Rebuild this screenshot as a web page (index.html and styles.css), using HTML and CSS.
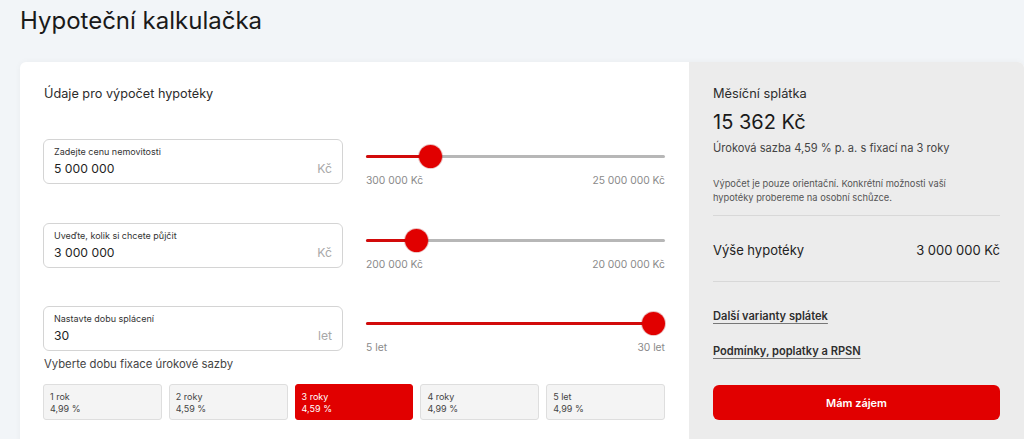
FILE: index.html
```html
<!DOCTYPE html>
<html lang="cs">
<head>
<meta charset="utf-8">
<title>Hypoteční kalkulačka</title>
<link rel="stylesheet" href="styles.css">
</head>
<body>
<h1 class="title">Hypoteční kalkulačka</h1>
<div class="card">
  <section class="form">
    <h2 class="form-heading">Údaje pro výpočet hypotéky</h2>

    <div class="row">
      <label class="field">
        <span class="field-label">Zadejte cenu nemovitosti</span>
        <span class="field-line"><span class="field-value">5 000 000</span><span class="field-unit">Kč</span></span>
      </label>
      <div class="slider">
        <div class="track-area">
          <div class="track"><div class="fill" style="width: calc(11.5px + 0.1903 * (100% - 23px))"></div></div>
          <div class="thumb" style="left: calc(0.1903 * (100% - 23px))"></div>
        </div>
        <div class="range-labels"><span>300 000 Kč</span><span>25 000 000 Kč</span></div>
      </div>
    </div>

    <div class="row">
      <label class="field">
        <span class="field-label">Uveďte, kolik si chcete půjčit</span>
        <span class="field-line"><span class="field-value">3 000 000</span><span class="field-unit">Kč</span></span>
      </label>
      <div class="slider">
        <div class="track-area">
          <div class="track"><div class="fill" style="width: calc(11.5px + 0.1414 * (100% - 23px))"></div></div>
          <div class="thumb" style="left: calc(0.1414 * (100% - 23px))"></div>
        </div>
        <div class="range-labels"><span>200 000 Kč</span><span>20 000 000 Kč</span></div>
      </div>
    </div>

    <div class="row row-last">
      <label class="field">
        <span class="field-label">Nastavte dobu splácení</span>
        <span class="field-line"><span class="field-value">30</span><span class="field-unit">let</span></span>
      </label>
      <div class="slider">
        <div class="track-area">
          <div class="track"><div class="fill" style="width: calc(11.5px + 1 * (100% - 23px))"></div></div>
          <div class="thumb" style="left: calc(1 * (100% - 23px))"></div>
        </div>
        <div class="range-labels"><span>5 let</span><span>30 let</span></div>
      </div>
    </div>

    <p class="fix-heading">Vyberte dobu fixace úrokové sazby</p>
    <div class="fix-options">
      <button class="fix"><span>1 rok</span><span>4,99 %</span></button>
      <button class="fix"><span>2 roky</span><span>4,59 %</span></button>
      <button class="fix fix-active"><span>3 roky</span><span>4,59 %</span></button>
      <button class="fix"><span>4 roky</span><span>4,99 %</span></button>
      <button class="fix"><span>5 let</span><span>4,99 %</span></button>
    </div>
  </section>

  <aside class="summary">
    <div class="sum-label">Měsíční splátka</div>
    <div class="sum-amount">15 362 Kč</div>
    <div class="sum-rate">Úroková sazba 4,59 % p. a. s fixací na 3 roky</div>
    <p class="sum-note">Výpočet je pouze orientační. Konkrétní možnosti vaší hypotéky probereme na osobní schůzce.</p>
    <div class="sum-row"><span>Výše hypotéky</span><span>3 000 000 Kč</span></div>
    <div class="sum-links">
      <a class="sum-link" href="#">Další varianty splátek</a>
      <a class="sum-link" href="#">Podmínky, poplatky a RPSN</a>
    </div>
    <button class="cta">Mám zájem</button>
  </aside>
</div>
</body>
</html>
```

FILE: styles.css
```css
* { box-sizing: border-box; }

html, body {
  margin: 0;
  padding: 0;
}

body {
  background: #f2f5f8;
  font-family: Inter, "Noto Sans", "Liberation Sans", sans-serif;
  color: #222;
  overflow: hidden;
}

.title {
  margin: 0;
  padding: 6px 0 0 20px;
  font-size: 24px;
  line-height: 30px;
  font-weight: 400;
  color: #1a1a1a;
}

.card {
  margin: 26px 0 0 20px;
  display: grid;
  grid-template-columns: 669px 1fr;
  background: #fff;
  border-radius: 6px;
  box-shadow: 0 0 6px rgba(0, 0, 0, 0.04);
  overflow: hidden;
  min-height: 420px;
}

.form {
  padding: 22px 24px 0 23px;
}

.form-heading {
  margin: 0 0 35px 1px;
  font-size: 12.7px;
  line-height: 20px;
  font-weight: 400;
  color: #2b2b2b;
}

.row {
  display: grid;
  grid-template-columns: 300px 1fr;
  column-gap: 23px;
  margin-bottom: 35.5px;
}

.row-last {
  margin-bottom: 2px;
}

.field {
  display: flex;
  flex-direction: column;
  height: 45px;
  border: 1px solid #d4d4d4;
  border-radius: 6px;
  padding: 6px 10px 0 10px;
  background: #fff;
}

.field-label {
  font-size: 9px;
  line-height: 12px;
  color: #333;
}

.field-line {
  display: flex;
  justify-content: space-between;
  margin-top: 3px;
  font-size: 12.2px;
  line-height: 16px;
}

.field-value {
  color: #1f1f1f;
}

.field-unit {
  color: #a8a8a8;
}

.slider {
  display: flex;
  flex-direction: column;
}

.track-area {
  position: relative;
  height: 34px;
}

.track {
  position: absolute;
  left: 0;
  right: 0;
  top: 16px;
  height: 3px;
  background: #b7b7b7;
  border-radius: 2px;
}

.fill {
  height: 100%;
  background: #d20a0a;
  border-radius: 2px;
}

.thumb {
  position: absolute;
  top: 6px;
  width: 23px;
  height: 23px;
  border-radius: 50%;
  background: #e10000;
  box-shadow: 0 0 0 1px rgba(170, 0, 0, 0.25);
}

.range-labels {
  display: flex;
  justify-content: space-between;
  font-size: 10.3px;
  line-height: 14px;
  color: #8a8a8a;
}

.fix-heading {
  margin: 0 0 12px 1px;
  font-size: 11.3px;
  line-height: 16px;
  color: #444;
}

.fix-options {
  display: grid;
  grid-template-columns: repeat(5, 1fr);
  column-gap: 7px;
}

.fix {
  display: flex;
  flex-direction: column;
  align-items: flex-start;
  height: 36px;
  padding: 6px 6px 0 6px;
  border: 1px solid #dedede;
  border-radius: 3px;
  background: #f4f4f4;
  font-family: inherit;
  font-size: 9px;
  line-height: 11.5px;
  color: #444;
  text-align: left;
}

.fix-active {
  background: #e10000;
  border-color: #e10000;
  color: #fff;
}

.summary {
  background: #ececec;
  padding: 22px 24px 0 24px;
}

.sum-label {
  font-size: 12.8px;
  line-height: 20px;
  color: #2b2b2b;
}

.sum-amount {
  margin-top: 6px;
  font-size: 20px;
  line-height: 24px;
  color: #1a1a1a;
}

.sum-rate {
  margin-top: 6px;
  font-size: 11.1px;
  line-height: 16px;
  color: #444;
}

.sum-note {
  max-width: 250px;
  margin: 21px 0 0 0;
  padding-bottom: 10px;
  font-size: 9.3px;
  line-height: 14px;
  color: #555;
}

.sum-row {
  display: flex;
  justify-content: space-between;
  padding: 24px 0 21px 0;
  font-size: 13px;
  line-height: 20px;
  color: #222;
  border-top: 1px solid #d8d8d8;
  border-bottom: 1px solid #d8d8d8;
}

.sum-links {
  display: flex;
  flex-direction: column;
  align-items: flex-start;
  gap: 19px;
  padding-top: 26px;
}

.sum-link {
  font-size: 11.1px;
  line-height: 16px;
  font-weight: 600;
  color: #2e2e2e;
  text-decoration: underline;
  text-decoration-color: #777;
  text-underline-offset: 3px;
}

.cta {
  display: block;
  width: 100%;
  height: 35px;
  margin-top: 26px;
  border: 0;
  border-radius: 6px;
  background: #e10000;
  color: #fff;
  font-family: inherit;
  font-size: 11px;
  font-weight: 600;
}
```
